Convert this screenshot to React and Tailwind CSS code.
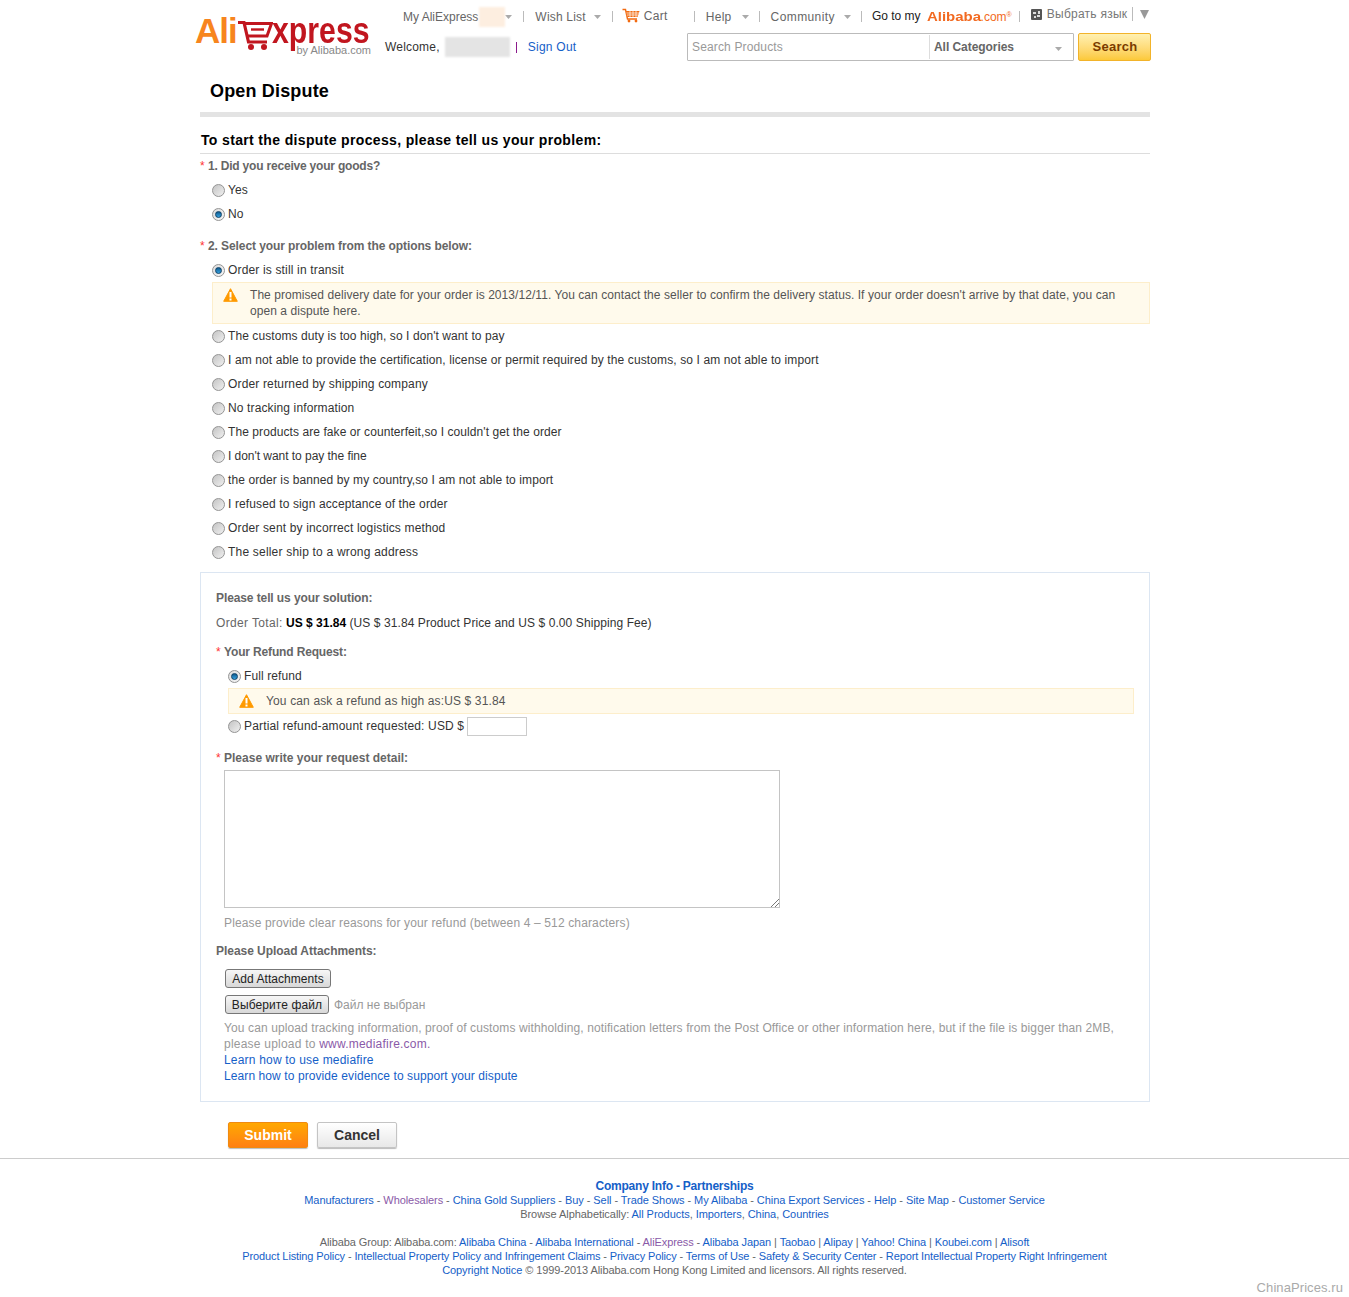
import React from "react";

const Radio = ({ on }) => (
  <span className={"relative block w-[13px] h-[13px] shrink-0 rounded-full border border-[#949494] bg-gradient-to-br " + (on ? "from-[#dcdcdc] to-[#f6f6f6]" : "from-[#c4c4c4] to-[#f0f0f0]")}>
    {on && <span className="absolute left-[2px] top-[2px] w-[7px] h-[7px] rounded-full border border-[#0a3f66] bg-gradient-to-b from-[#0d5a8e] to-[#36a2e0]" />}
  </span>
);

const Opt = ({ on, t = "", children }) => (
  <div className="flex items-center h-6 text-[#333]">
    <Radio on={on} />
    <span className={"ml-[3px] " + t}>{children}</span>
  </div>
);

const Warn = () => (
  <svg width="15" height="14" viewBox="0 0 15 14" className="shrink-0">
    <path d="M7.5 0.7 L14.3 13.3 L0.7 13.3 Z" fill="#ff9a00" stroke="#ff9a00" strokeLinejoin="round" />
    <rect x="6.5" y="4" width="2" height="5.5" fill="#fff" />
    <rect x="6.5" y="10.5" width="2" height="2" fill="#fff" />
  </svg>
);

const Caret = ({ className = "" }) => (
  <svg width="7" height="4" viewBox="0 0 7 4" className={"shrink-0 " + className}>
    <path d="M0 0H7L3.5 4Z" fill="#aaa" />
  </svg>
);

const Sep = ({ className = "" }) => <span className={"block w-px h-[11px] bg-[#bbb] shrink-0 " + className} />;

const Star = () => <span className="text-[#f33] font-normal">* </span>;

const L = ({ v, children }) => <span className={v ? "text-[#8a5aa8]" : "text-[#1560c8]"}>{children}</span>;

const problems = [
  ["The customs duty is too high, so I don't want to pay", "tracking-[0.08px]"],
  ["I am not able to provide the certification, license or permit required by the customs, so I am not able to import", "tracking-[0.115px]"],
  ["Order returned by shipping company", "tracking-[0.15px]"],
  ["No tracking information", "tracking-[0.13px]"],
  ["The products are fake or counterfeit,so I couldn't get the order", "tracking-[0.08px]"],
  ["I don't want to pay the fine", "tracking-[-0.04px]"],
  ["the order is banned by my country,so I am not able to import", "tracking-[0.1px]"],
  ["I refused to sign acceptance of the order", "tracking-[0.12px]"],
  ["Order sent by incorrect logistics method", "tracking-[0.15px]"],
  ["The seller ship to a wrong address", "tracking-[0.2px]"],
];

export default function App() {
  return (
    <div className="relative w-[1349px] h-[1297px] bg-white text-[12px] leading-4 text-[#666] overflow-hidden" style={{ fontFamily: '"Liberation Sans", Arial, sans-serif' }}>
      {/* header */}
      <header className="flex h-[66px] ml-[195px] w-[956px]">
        <div className="w-[190px] shrink-0 pt-[10px]">
          <div className="flex items-start h-[37px] w-[176px]">
            <span className="text-[35px] leading-[40px] mt-[1px] font-bold text-[#f7851e] tracking-[-1px]">Ali</span>
            <svg width="36" height="31" viewBox="0 0 36 31" className="shrink-0 mt-[10px]">
              <path d="M1 2.5H7L11.5 22H30" fill="none" stroke="#c1161f" strokeWidth="3.2" />
              <path d="M7 3.5H34.5L30 16H10" fill="none" stroke="#c1161f" strokeWidth="3" />
              <path d="M14 9.5H27" stroke="#c1161f" strokeWidth="2.4" />
              <circle cx="14" cy="27" r="3" fill="#c1161f" />
              <circle cx="27" cy="27" r="3" fill="#c1161f" />
            </svg>
            <span className="block w-[98px] shrink-0 -ml-[1px] mt-[1px] text-[36px] leading-[40px] font-bold text-[#c1161f] origin-left scale-x-[0.84]">xpress</span>
          </div>
          <div className="text-[11px] leading-3 text-[#888] text-right pr-[14px] -mt-[3px] w-[190px]">by Alibaba.com</div>
        </div>
        <div className="flex-1 flex flex-col">
          <div className="flex items-center h-[33px] pl-[18px] whitespace-nowrap">
            <span>My AliExpress</span>
            <span className="block w-[26px] h-[20px] ml-[1px] bg-[#fdeee0] blur-[1px]" />
            <Caret />
            <Sep className="ml-[11px]" />
            <span className="ml-[11px] tracking-[0.2px]">Wish List</span>
            <Caret className="ml-[8px]" />
            <Sep className="ml-[11px]" />
            <svg width="18" height="15" viewBox="0 0 18 15" className="ml-[9px] mb-[2px] shrink-0">
              <path d="M0.5 1.5H3.5L5.5 11H15" fill="none" stroke="#f26a10" strokeWidth="1.4" />
              <path d="M4 3H17.5L15.5 9H5.5Z" fill="#f26a10" />
              <path d="M4.5 5H17M4.8 7H16M8 3V9M11 3V9M14 3V9" stroke="#fff" strokeWidth="0.7" />
              <circle cx="7" cy="13" r="1.4" fill="#f26a10" />
              <circle cx="14" cy="13" r="1.4" fill="#f26a10" />
            </svg>
            <span className="ml-[4px] mb-[2px] tracking-[0.3px]">Cart</span>
            <Sep className="ml-[26px]" />
            <span className="ml-[11px] tracking-[0.3px]">Help</span>
            <Caret className="ml-[10px]" />
            <Sep className="ml-[10px]" />
            <span className="ml-[11px] tracking-[0.4px]">Community</span>
            <Caret className="ml-[9px]" />
            <Sep className="ml-[10px]" />
            <span className="ml-[10px] text-[#222] mb-[1px]">Go to my</span>
            <span className="ml-[6px] flex items-baseline">
              <span className="block w-[54px] text-[13px] font-bold text-[#f26a21] origin-left scale-x-[1.15]">Alibaba</span>
              <span className="text-[#f26a21]">.com</span>
              <span className="text-[7px] leading-[7px] text-[#f26a21] self-start mt-[2px]">®</span>
            </span>
            <Sep className="ml-[7px]" />
            <svg width="11" height="11" viewBox="0 0 11 11" className="ml-[11px] mb-[5px] shrink-0">
              <rect width="11" height="11" rx="1" fill="#555" />
              <path d="M2 3h3v2H2zM7 2h2v3H7zM3 7h2v2H3zM6 6h3v2H6z" fill="#ddd" />
            </svg>
            <span className="ml-[5px] mb-[5px] text-[#777] tracking-[0.25px]">Выбрать язык</span>
            <Sep className="ml-[5px] mb-[6px] h-[14px]" />
            <svg width="9" height="9" viewBox="0 0 9 9" className="ml-[7px] mb-[5px] shrink-0"><path d="M0 0H9L4.5 9Z" fill="#999" /></svg>
          </div>
          <div className="flex items-start">
            <div className="flex items-center h-[28px] w-[302px] whitespace-nowrap text-[#333]">
              <span className="tracking-[0.2px]">Welcome,</span>
              <span className="block w-[65px] h-[20px] ml-[5px] bg-[#e4e4e4] blur-[1px]" />
              <span className="block w-px h-[11px] bg-[#8b1a8b] ml-[6px]" />
              <span className="ml-[11px] text-[#1560c8] tracking-[0.25px]">Sign Out</span>
            </div>
            <div className="flex w-[387px] h-[28px] border border-[#bbb] rounded-[1px] items-center">
              <span className="w-[242px] pl-[4px] text-[#999] border-r border-[#ddd] leading-[24px] tracking-[0.15px]">Search Products</span>
              <span className="pl-[4px] font-bold text-[#666] flex-1 tracking-[-0.05px]">All Categories</span>
              <Caret className="mr-[11px] mt-[3px]" />
            </div>
            <div className="ml-[4px] w-[73px] h-[28px] pl-px border border-[#f2b32a] rounded-[2px] bg-gradient-to-b from-[#fff0b0] to-[#fcc938] flex items-center justify-center text-[13px] font-bold text-[#7a3b00] tracking-[0.3px]">Search</div>
          </div>
        </div>
      </header>

      <main className="ml-[200px] w-[950px]">
        <h1 className="pl-[10px] text-[18px] leading-[50px] h-[46px] font-bold text-black tracking-[0.17px]">Open Dispute</h1>
        <div className="h-[5px] bg-[#e3e3e3]" />
        <h2 className="mt-[14px] h-[23px] pl-px text-[14px] leading-[18px] font-bold text-black border-b border-[#ddd] tracking-[0.35px]">To start the dispute process, please tell us your problem:</h2>
        <div className="mt-[4px] font-bold leading-4"><Star /><span className="tracking-[-0.2px]">1. Did you receive your goods?</span></div>
        <div className="pl-[12px] mt-[4px]">
          <Opt t="tracking-[0.1px]">Yes</Opt>
          <Opt on>No</Opt>
        </div>
        <div className="mt-[12px] font-bold leading-4"><Star /><span className="tracking-[-0.09px]">2. Select your problem from the options below:</span></div>
        <div className="pl-[12px] mt-[4px]">
          <Opt on t="tracking-[0.16px]">Order is still in transit</Opt>
          <div className="flex h-[42px] border border-[#fdeecb] bg-[#fffaec] pl-[10px] pt-[4px] pr-[20px]">
            <span className="mt-[1px]"><Warn /></span>
            <span className="ml-[12px] text-[#555] tracking-[0.06px]">The promised delivery date for your order is 2013/12/11. You can contact the seller to confirm the delivery status. If your order doesn't arrive by that date, you can open a dispute here.</span>
          </div>
          {problems.map(([p, t]) => <Opt key={p} t={t}>{p}</Opt>)}
        </div>

        <section className="mt-[8px] h-[530px] border border-[#dce6f2] pl-[15px] pr-[15px] pt-[17px]">
          <div className="font-bold tracking-[-0.1px]">Please tell us your solution:</div>
          <div className="mt-[9px]"><span className="tracking-[0.35px]">Order Total:</span> <span className="font-bold text-black">US $ 31.84</span> <span className="text-[#333] tracking-[0.09px]">(US $ 31.84 Product Price and US $ 0.00 Shipping Fee)</span></div>
          <div className="mt-[13px] font-bold"><Star /><span className="tracking-[-0.15px]">Your Refund Request:</span></div>
          <div className="pl-[12px] mt-[4px]">
            <Opt on t="tracking-[0.1px]">Full refund</Opt>
            <div className="flex items-center h-[26px] border border-[#fdeecb] bg-[#fffaec] pl-[10px]">
              <Warn />
              <span className="ml-[12px] text-[#555] tracking-[0.14px]">You can ask a refund as high as:US $ 31.84</span>
            </div>
            <div className="flex items-center h-6 text-[#333]">
              <Radio />
              <span className="ml-[3px] tracking-[0.16px]">Partial refund-amount requested: USD $</span>
              <span className="block ml-[3px] w-[60px] h-[19px] border border-[#ccc] bg-white" />
            </div>
          </div>
          <div className="mt-[12px] font-bold"><Star />Please write your request detail:</div>
          <div className="ml-[8px] mt-[4px] relative w-[556px] h-[138px] border border-[#c4c4c4]">
            <svg width="9" height="9" viewBox="0 0 9 9" className="absolute right-0 bottom-0"><path d="M1 9L9 1M5 9L9 5" stroke="#777" strokeWidth="1" /></svg>
          </div>
          <div className="ml-[8px] mt-[7px] text-[#999] tracking-[0.14px]">Please provide clear reasons for your refund (between 4 – 512 characters)</div>
          <div className="mt-[12px] font-bold tracking-[-0.04px]">Please Upload Attachments:</div>
          <div className="ml-[9px] mt-[10px] flex items-center justify-center w-[106px] h-[19px] border border-[#777] rounded-[3px] bg-gradient-to-b from-[#f7f7f7] to-[#d8d8d8] text-[#222] tracking-[0.05px]">Add Attachments</div>
          <div className="ml-[9px] mt-[7px] flex items-center">
            <div className="flex items-center justify-center w-[104px] h-[19px] border border-[#777] rounded-[3px] bg-gradient-to-b from-[#f7f7f7] to-[#d8d8d8] text-[#222] tracking-[0.1px]">Выберите файл</div>
            <span className="ml-[5px] text-[#999]">Файл не выбран</span>
          </div>
          <div className="ml-[8px] mt-[6px] text-[#999] tracking-[0.11px] whitespace-nowrap">You can upload tracking information, proof of customs withholding, notification letters from the Post Office or other information here, but if the file is bigger than 2MB,</div>
          <div className="ml-[8px] text-[#999] tracking-[0.22px]">please upload to <L v>www.mediafire.com.</L></div>
          <div className="ml-[8px] tracking-[0.19px]"><L>Learn how to use mediafire</L></div>
          <div className="ml-[8px] tracking-[0.09px]"><L>Learn how to provide evidence to support your dispute</L></div>
        </section>

        <div className="flex mt-[20px] ml-[28px]">
          <div className="flex items-center justify-center w-[80px] h-[26px] rounded-[2px] border border-[#f08a10] bg-gradient-to-b from-[#ffa800] to-[#ff7f12] text-white text-[14px] font-bold shadow-[0_1px_1px_#bbb]">Submit</div>
          <div className="ml-[9px] flex items-center justify-center w-[80px] h-[26px] rounded-[2px] border border-[#c4c4c4] bg-gradient-to-b from-[#fff] to-[#e8e8e8] text-[#333] text-[14px] font-bold shadow-[0_1px_1px_#bbb]">Cancel</div>
        </div>
      </main>

      <footer className="mt-[10px] border-t border-[#ccc] pt-[20px] text-center text-[11px] leading-[14px] text-[#666]">
        <div className="text-[12px] font-bold text-[#1560c8] tracking-[-0.22px]">Company Info - Partnerships</div>
        <div className="tracking-[-0.065px]"><L>Manufacturers</L> - <L v>Wholesalers</L> - <L>China Gold Suppliers</L> - <L>Buy</L> - <L>Sell</L> - <L>Trade Shows</L> - <L>My Alibaba</L> - <L>China Export Services</L> - <L>Help</L> - <L>Site Map</L> - <L>Customer Service</L></div>
        <div className="tracking-[-0.05px]">Browse Alphabetically: <L>All Products</L>, <L>Importers</L>, <L>China</L>, <L>Countries</L></div>
        <div className="mt-[14px] tracking-[-0.09px]">Alibaba Group: Alibaba.com: <L>Alibaba China</L> - <L>Alibaba International</L> - <L v>AliExpress</L> - <L>Alibaba Japan</L> | <L>Taobao</L> | <L>Alipay</L> | <L>Yahoo! China</L> | <L>Koubei.com</L> | <L>Alisoft</L></div>
        <div className="tracking-[-0.115px]"><L>Product Listing Policy</L> - <L>Intellectual Property Policy and Infringement Claims</L> - <L>Privacy Policy</L> - <L>Terms of Use</L> - <L>Safety &amp; Security Center</L> - <L>Report Intellectual Property Right Infringement</L></div>
        <div className="tracking-[-0.08px]"><L>Copyright Notice</L> © 1999-2013 Alibaba.com Hong Kong Limited and licensors. All rights reserved.</div>
      </footer>
      <div className="absolute right-[6px] bottom-[1px] text-[13px] leading-4 text-[#aaa] tracking-[0.08px]">ChinaPrices.ru</div>
    </div>
  );
}
